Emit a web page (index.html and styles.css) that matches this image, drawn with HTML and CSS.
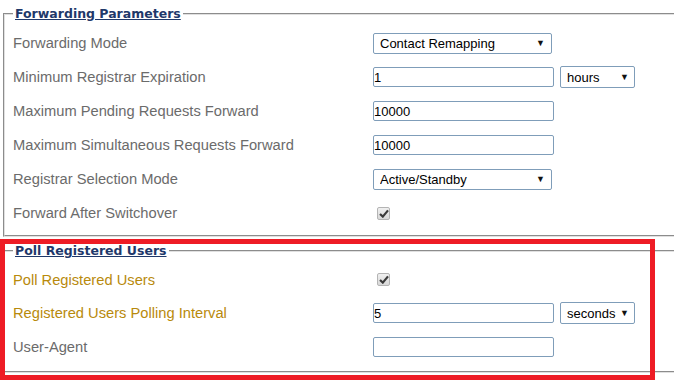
FILE: index.html
```html
<!DOCTYPE html>
<html lang="en">
<head>
<meta charset="UTF-8" />
<title>Forwarding Parameters</title>
<link rel="stylesheet" href="styles.css">
</head>
<body>

<fieldset class="group first">
  <legend>Forwarding Parameters</legend>
  <div class="row">
    <label>Forwarding Mode</label>
    <span class="select wide"><select><option>Contact Remapping</option></select></span>
  </div>
  <div class="row">
    <label>Minimum Registrar Expiration</label>
    <div class="pair">
      <input type="text" value="1" />
      <span class="select unit"><select><option>hours</option></select></span>
    </div>
  </div>
  <div class="row">
    <label>Maximum Pending Requests Forward</label>
    <input type="text" value="10000" />
  </div>
  <div class="row">
    <label>Maximum Simultaneous Requests Forward</label>
    <input type="text" value="10000" />
  </div>
  <div class="row">
    <label>Registrar Selection Mode</label>
    <span class="select wide"><select><option>Active/Standby</option></select></span>
  </div>
  <div class="row">
    <label>Forward After Switchover</label>
    <span class="check"><svg width="10" height="9" viewBox="0 0 10 9"><path d="M1 5 L3.8 7.6 L9 1.4" fill="none" stroke="#3a3a3a" stroke-width="2.2"/></svg></span>
  </div>
</fieldset>

<fieldset class="group second">
  <legend>Poll Registered Users</legend>
  <div class="row">
    <label class="changed">Poll Registered Users</label>
    <span class="check"><svg width="10" height="9" viewBox="0 0 10 9"><path d="M1 5 L3.8 7.6 L9 1.4" fill="none" stroke="#3a3a3a" stroke-width="2.2"/></svg></span>
  </div>
  <div class="row">
    <label class="changed">Registered Users Polling Interval</label>
    <div class="pair">
      <input type="text" value="5" />
      <span class="select unit"><select><option>seconds</option></select></span>
    </div>
  </div>
  <div class="row">
    <label>User-Agent</label>
    <input type="text" value="" />
  </div>
</fieldset>

<!-- marca vermelha da captura -->
<div class="highlight"></div>

</body>
</html>
```

FILE: styles.css
```css
html, body {
  overflow: hidden;
}
body {
  margin: 0;
  padding: 0 0 0 3px;
  background: white;
  font-family: "Liberation Sans", Arial, sans-serif;
  position: relative;
  height: 380px;
}

.group {
  border: 2px groove #e0e0e0;
  border-right: none;
  margin: 6px -30px 0 0;
  padding: 4px 0 5px 8px;
  min-width: 0;
}
.group.second {
  padding-top: 4px;
  padding-bottom: 7px;
}
.group legend {
  font-family: "DejaVu Sans", Verdana, sans-serif;
  font-weight: bold;
  font-size: 12.5px;
  line-height: 16px;
  color: #1f386a;
  text-decoration: underline;
  padding: 0 2px;
}

.row {
  display: grid;
  grid-template-columns: 360px 1fr;
  align-items: center;
  justify-items: start;
  height: 34px;
}
.second .row {
  height: 33.5px;
}
.row label {
  font-size: 14.7px;
  color: #6b6b6b;
}
.row label.changed {
  color: #b88a0c;
}

input[type="text"] {
  box-sizing: border-box;
  width: 181px;
  height: 20px;
  border: 1px solid #7f9db9;
  border-radius: 2px;
  padding: 0 1px 0 0;
  margin: 0;
  font-family: "Liberation Sans", Arial, sans-serif;
  font-size: 13px;
  color: #000;
}

.pair {
  display: flex;
  align-items: center;
  gap: 6px;
}

.select {
  position: relative;
  display: inline-block;
  line-height: 0;
}
.select select {
  appearance: none;
  -webkit-appearance: none;
  box-sizing: border-box;
  height: 21px;
  border: 1px solid #7f9db9;
  border-radius: 2px;
  background: white;
  padding: 0 0 0 6px;
  margin: 0;
  font-family: "Liberation Sans", Arial, sans-serif;
  font-size: 13px;
  color: #000;
}
.select::after {
  content: "\25BC";
  position: absolute;
  right: 7px;
  top: 10px;
  line-height: 1px;
  font-size: 9px;
  color: #111;
  pointer-events: none;
}
.select.wide select {
  width: 179px;
}
.select.unit select {
  width: 75px;
  height: 22px;
}
.select.unit::after {
  right: 6px;
  top: 11px;
}

.check {
  display: flex;
  align-items: center;
  justify-content: center;
  box-sizing: border-box;
  width: 13px;
  height: 13px;
  margin-left: 4px;
  border: 1px solid #b4b4b4;
  border-radius: 2px;
  background: linear-gradient(#f0f0f0, #d8d8d8);
}

.highlight {
  position: absolute;
  left: 0;
  top: 239px;
  width: 655px;
  height: 141px;
  box-sizing: border-box;
  border: 5px solid #ee1c25;
}
```
